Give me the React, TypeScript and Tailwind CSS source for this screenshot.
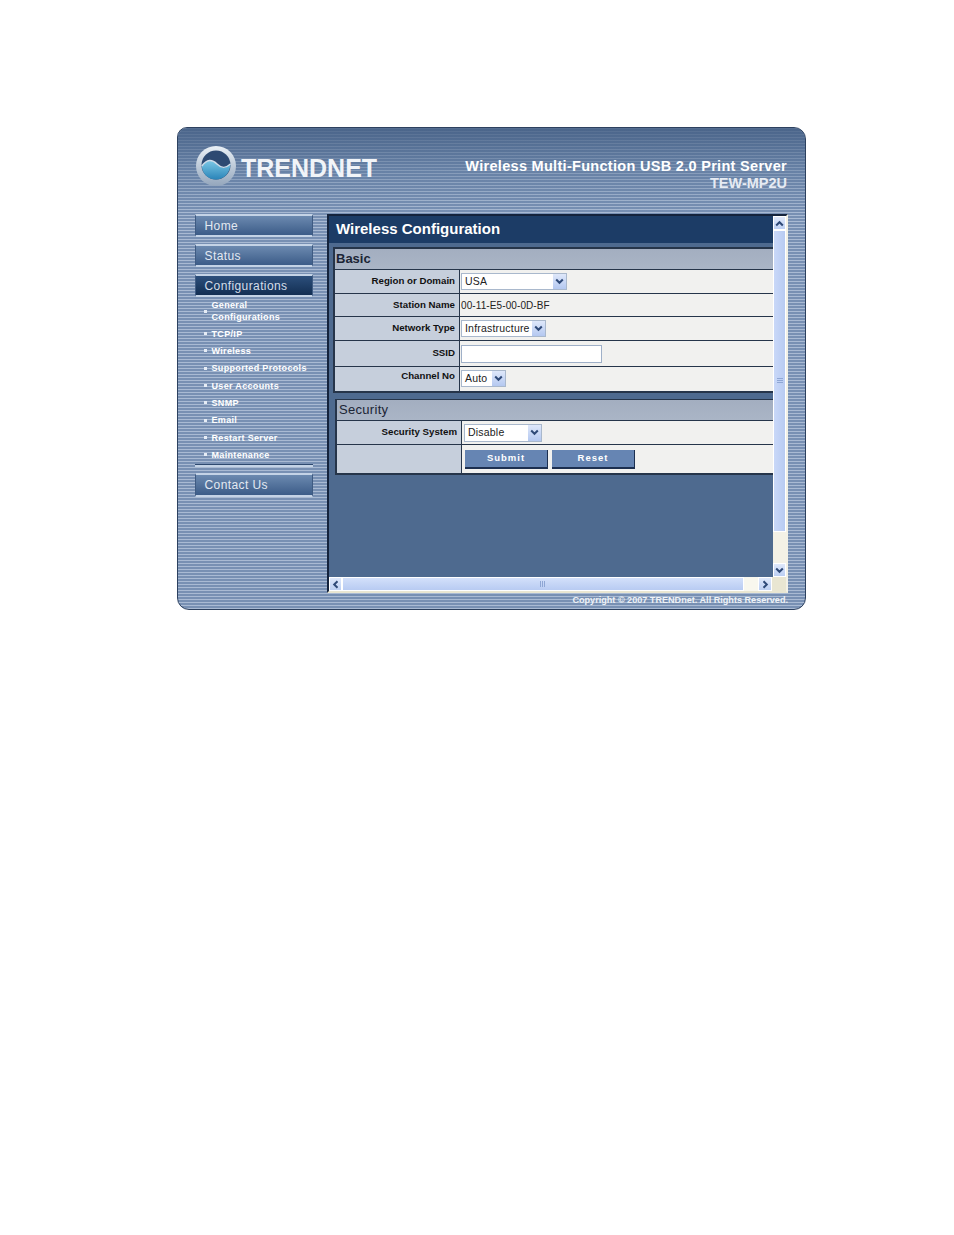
import React from "react";

const stripes =
  "bg-[repeating-linear-gradient(180deg,#a9bad3_0px,#a9bad3_1px,#7890b3_1px,#7890b3_3px)]";

function Chevron({ dir = "down" }: { dir?: "down" | "up" | "left" | "right" }) {
  const rot = { down: 0, up: 180, left: 90, right: -90 }[dir];
  return (
    <svg width="9" height="7" viewBox="0 0 9 7" style={{ transform: `rotate(${rot}deg)` }}>
      <path d="M1.2 1.5 L4.5 4.8 L7.8 1.5" fill="none" stroke="#2f4a78" strokeWidth="2" />
    </svg>
  );
}

function NavBtn({ label, active, large }: { label: string; active?: boolean; large?: boolean }) {
  return (
    <div
      className={`w-[118px] flex items-center pl-[9px] border-t-2 border-b-2 border-l border-r border-t-[#c4d3e6] border-b-[#c4d3e6] border-l-[#3f5b82] border-r-[#3f5b82] text-[12px] tracking-[0.4px] ${
        active
          ? "bg-gradient-to-b from-[#2c4f7c] to-[#132f53] text-[#d5deea]"
          : "bg-gradient-to-b from-[#6c8ab0] to-[#3c5c88] text-[#e3e9f2]"
      } ${large ? "h-[24px]" : "h-[23px]"}`}
    >
      {label}
    </div>
  );
}

function SubItem({ lines, h }: { lines: string[]; h: string }) {
  return (
    <div className={`flex items-center text-[9px] leading-[12px] font-bold text-white tracking-[0.33px] ${h}`}>
      <span className="w-[3px] h-[3px] bg-[#e6edf6] ml-[9px] mr-[5px] shrink-0" />
      <div>
        {lines.map((l) => (
          <div key={l}>{l}</div>
        ))}
      </div>
    </div>
  );
}

function Select({ value, w, tall }: { value: string; w: string; tall?: boolean }) {
  return (
    <div className={`${w} ${tall ? "h-[18px]" : "h-[17px]"} flex items-center justify-between bg-white border border-[#a9b8cc] pl-[3px] text-[10.5px] text-[#222]`}>
      <span className="tracking-[0.2px]">{value}</span>
      <span className="w-[13px] h-full flex items-center justify-center bg-gradient-to-b from-[#dfe8fa] to-[#b4c8f0]">
        <Chevron />
      </span>
    </div>
  );
}

function Row({ label, children, h, labelClass = "items-center", contentClass = "pl-[1px]", last }: { label: string; children?: React.ReactNode; h: string; labelClass?: string; contentClass?: string; last?: boolean }) {
  return (
    <div className={`flex ${h} ${last ? "" : "border-b border-[#26354a]"}`}>
      <div className={`w-[125px] shrink-0 bg-[#c6cfdc] border-r border-[#26354a] flex justify-end pr-[4px] text-[9.7px] font-bold text-[#111] ${labelClass}`}>
        {label}
      </div>
      <div className={`flex-1 bg-[#f1f1ef] flex items-center ${contentClass}`}>{children}</div>
    </div>
  );
}

function Submit({ label }: { label: string }) {
  return (
    <div className="w-[83px] h-[19px] flex items-center justify-center bg-[#6685b3] border-b-2 border-r border-b-[#1c2f50] border-r-[#1c2f50] text-white text-[9.5px] font-bold tracking-[1px]">
      {label}
    </div>
  );
}

export default function App() {
  return (
    <div className="w-[954px] h-[1235px] bg-white pt-[127px] pl-[177px] font-['Liberation_Sans',Arial,sans-serif]">
      <div className={`w-[629px] h-[483px] rounded-tl-[10px] rounded-tr-[12px] rounded-bl-[12px] rounded-br-[12px] border-[1.5px] border-[#2d415f] overflow-hidden flex flex-col ${stripes}`}>
        {/* header */}
        <div className="h-[86px] shrink-0 flex justify-between bg-gradient-to-b from-[#3f5a80cc] via-[#4f6c9266] to-[#6d88ab00]">
          <div className="flex items-center h-[74px] pl-[17px] pt-[2px]">
            <svg width="42" height="42" viewBox="0 0 42 42">
              <defs>
                <linearGradient id="w" x1="0" y1="0" x2="0" y2="1">
                  <stop offset="0" stopColor="#e9f0f6" />
                  <stop offset="1" stopColor="#94a6bc" />
                </linearGradient>
                <linearGradient id="s" x1="0" y1="0" x2="0" y2="1">
                  <stop offset="0" stopColor="#7cc8e6" />
                  <stop offset="1" stopColor="#2a84b8" />
                </linearGradient>
              </defs>
              <circle cx="21" cy="21" r="20" fill="url(#w)" />
              <circle cx="21" cy="20" r="14.5" fill="#2d4a72" />
              <path d="M6.8 21 C12 14 17 14 22 19 C27 24 31 23 35.5 19 C35 28 29 34.5 21 34.5 C13 34.5 7.5 29 6.8 21 Z" fill="url(#s)" />
              <path d="M6.8 21 C12 14 17 14 22 19 C27 24 31 23 35.5 19" fill="none" stroke="#cfdbe8" strokeWidth="1.5" />
            </svg>
            <span className="ml-[4px] mt-[5px] text-[25px] leading-none font-bold text-[#f1f4f8]">
              TRENDNET
            </span>
          </div>
          <div className="pt-[30px] pr-[18px] text-right text-white font-bold text-[14.5px] leading-[17px] tracking-[0.3px]">
            <div>Wireless Multi-Function USB 2.0 Print Server</div>
            <div className="text-[#e6ebf3] tracking-normal">TEW-MP2U</div>
          </div>
        </div>

        {/* body */}
        <div className="flex-1 flex min-h-0">
          <div className="w-[149px] shrink-0 pl-[16.5px]">
            <div className="flex flex-col gap-[7px]">
              <NavBtn label="Home" />
              <NavBtn label="Status" />
              <NavBtn label="Configurations" active />
            </div>
            <div>
              <SubItem lines={["General", "Configurations"]} h="h-[28px]" />
              <SubItem lines={["TCP/IP"]} h="h-[17px]" />
              <SubItem lines={["Wireless"]} h="h-[17px]" />
              <SubItem lines={["Supported Protocols"]} h="h-[18px]" />
              <SubItem lines={["User Accounts"]} h="h-[17px]" />
              <SubItem lines={["SNMP"]} h="h-[17px]" />
              <SubItem lines={["Email"]} h="h-[18px]" />
              <SubItem lines={["Restart Server"]} h="h-[17px]" />
              <SubItem lines={["Maintenance"]} h="h-[17px]" />
            </div>
            <div className="w-[118px] h-[3px] mt-[1px] bg-[#c4d3e6] border-t border-[#2f4a70]" />
            <div className="mt-[6px]">
              <NavBtn label="Contact Us" large />
            </div>
          </div>

          {/* content frame */}
          <div className="w-[461px] h-[379px] shrink-0 border-2 border-[#14233c] border-r-[#f3f1e6] border-b-[#e9e6d2] flex flex-col bg-[#4e6a8f]">
            <div className="flex flex-1 min-h-0">
              <div className="flex-1 min-w-0">
                <div className="h-[27px] bg-[#1c3c66] flex items-center pl-[7px] text-white font-bold text-[15px]">
                  Wireless Configuration
                </div>
                <div className="pl-[4px] pt-[4px]">
                  <div className="border-2 border-r-0 border-[#26354a]">
                    <div className="h-[21px] bg-gradient-to-b from-[#a3aec0] to-[#aab5c6] flex items-center pl-[1px] text-[13px] font-bold text-[#1b2535] border-b border-[#26354a]">
                      Basic
                    </div>
                    <Row label="Region or Domain" h="h-[24px]">
                      <Select value="USA" w="w-[106px]" />
                    </Row>
                    <Row label="Station Name" h="h-[23px]">
                      <span className="text-[10px] text-[#222] tracking-[0.1px]">00-11-E5-00-0D-BF</span>
                    </Row>
                    <Row label="Network Type" h="h-[24px]">
                      <Select value="Infrastructure" w="w-[85px]" />
                    </Row>
                    <Row label="SSID" h="h-[26px]">
                      <input className="w-[141px] h-[18px] bg-white border border-[#9fb0c8] outline-none" readOnly />
                    </Row>
                    <Row label="Channel No" h="h-[24px]" labelClass="items-start pt-[2px]" contentClass="pl-[1px] pb-[1px]" last>
                      <Select value="Auto" w="w-[45px]" />
                    </Row>
                  </div>
                </div>
                <div className="pl-[6px] pt-[6px]">
                  <div className="border-2 border-r-0 border-t border-[#26354a]">
                    <div className="h-[21px] bg-gradient-to-b from-[#a3aec0] to-[#aab5c6] flex items-center pl-[2px] text-[13px] tracking-[0.3px] text-[#1b2535] border-b border-[#26354a]">
                      Security
                    </div>
                    <Row label="Security System" h="h-[24px]" contentClass="pl-[2px]">
                      <Select value="Disable" w="w-[78px]" tall />
                    </Row>
                    <Row label="" h="h-[28px]" contentClass="pl-[1px]" last>
                      <div className="flex gap-[4px] pl-[2px]">
                        <Submit label="Submit" />
                        <Submit label="Reset" />
                      </div>
                    </Row>
                  </div>
                </div>
              </div>

              {/* vertical scrollbar */}
              <div className="w-[13px] shrink-0 bg-[#f3f1e6] flex flex-col">
                <div className="h-[14px] bg-gradient-to-b from-[#dfe8fa] to-[#bccff3] border border-[#fff] flex items-center justify-center">
                  <Chevron dir="up" />
                </div>
                <div className="h-[302px] bg-gradient-to-r from-[#c9d8f8] to-[#b8cbf2] border border-[#fff] flex items-center justify-center">
                  <div className="w-[6px] h-[6px] bg-[repeating-linear-gradient(180deg,#8ea6d4_0px,#8ea6d4_1px,transparent_1px,transparent_2px)]" />
                </div>
                <div className="flex-1" />
                <div className="h-[14px] bg-gradient-to-b from-[#dfe8fa] to-[#bccff3] border border-[#fff] flex items-center justify-center">
                  <Chevron />
                </div>
              </div>
            </div>

            {/* horizontal scrollbar */}
            <div className="h-[14px] shrink-0 flex bg-[#f3f1e6]">
              <div className="w-[13px] bg-gradient-to-b from-[#dfe8fa] to-[#bccff3] border border-white flex items-center justify-center">
                <Chevron dir="left" />
              </div>
              <div className="w-[402px] bg-gradient-to-b from-[#d3e0fa] to-[#b8cbf2] border border-white flex items-center justify-center">
                <div className="w-[6px] h-[6px] bg-[repeating-linear-gradient(90deg,#8ea6d4_0px,#8ea6d4_1px,transparent_1px,transparent_2px)]" />
              </div>
              <div className="w-[14px] bg-[#f8f7ee]" />
              <div className="w-[14px] bg-gradient-to-b from-[#dfe8fa] to-[#bccff3] border border-white flex items-center justify-center">
                <Chevron dir="right" />
              </div>
              <div className="flex-1 bg-[#e9e6d2]" />
            </div>
          </div>
        </div>

        {/* footer */}
        <div className="h-[15px] shrink-0 pr-[17px] text-right text-[#eef2f7] font-bold text-[9.1px] leading-[13px]">
          Copyright © 2007 TRENDnet. All Rights Reserved.
        </div>
      </div>
    </div>
  );
}
